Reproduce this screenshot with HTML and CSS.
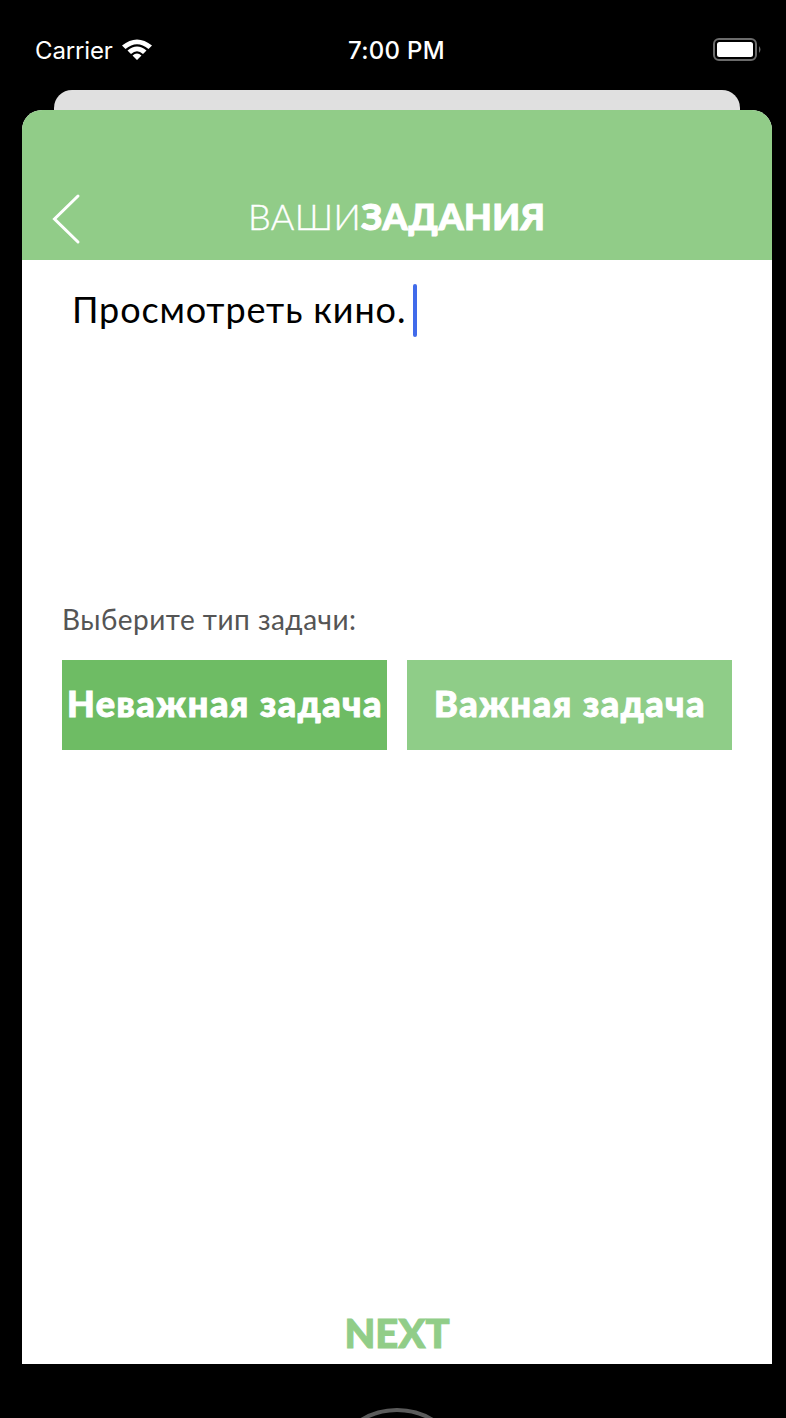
FILE: index.html
```
<!DOCTYPE html>
<html lang="ru">
<head>
<meta charset="utf-8">
<title>Ваши задания</title>
<link rel="stylesheet" href="styles.css">
</head>
<body>
<div class="phone">
  <header class="status">
    <div class="network"><span class="carrier">Carrier</span>
      <svg class="wifi" width="32" height="24" viewBox="0 0 32 24"><path d="M1 7.500Q16-4.500 31 7.500L27.500 11Q16 1.500 4.500 11Z M6.500 12.500Q16 4.500 25.500 12.500L22 16Q16 10.500 10 16Z M11.500 17.500Q16 13.500 20.500 17.500L16 22Z" fill="#fff"/></svg>
    </div>
    <time class="clock">7:00 PM</time>
    <svg class="battery" width="50" height="24" viewBox="0 0 50 24"><rect x="1" y="1" width="42" height="21" rx="5" fill="none" stroke="#6b6b6b" stroke-width="2"/><rect x="4" y="4" width="36" height="15" rx="2.500" fill="#fff"/><path d="M46 8Q49 11.500 46 15Z" fill="#6b6b6b"/></svg>
  </header>
  <div class="back-sheet"></div>
  <main class="sheet">
    <div class="navbar">
      <svg class="back" width="30" height="52" viewBox="0 0 30 52"><path d="M26 3L2.500 26L26 49" fill="none" stroke="#fff" stroke-width="3" stroke-linecap="round"/></svg>
      <h1 class="title"><span class="light">ВАШИ</span><span class="strong">ЗАДАНИЯ</span></h1>
    </div>
    <div class="editor"><span class="entry">Просмотреть кино.</span><i class="caret"></i></div>
    <p class="prompt">Выберите тип задачи:</p>
    <div class="choices">
      <button class="choice selected">Неважная задача</button>
      <button class="choice">Важная задача</button>
    </div>
    <button class="next">NEXT</button>
  </main>
  <footer class="bezel"><div class="home"></div></footer>
</div>
</body>
</html>
```
FILE: styles.css
```
* { box-sizing: border-box; }
body { margin: 0; background: #000; }
.phone { width: 786px; height: 1418px; overflow: hidden; display: flex; flex-direction: column; font-family: Lato, "Open Sans", sans-serif; }
.status { height: 90px; display: grid; grid-template-columns: 348px 1fr 73px; color: #fff; font: 24px/30px Inter, sans-serif; padding-top: 36px; }
.network { display: flex; padding-left: 35px; gap: 8px; }
.carrier { letter-spacing: -0.15px; }
.wifi { margin-top: 2px; }
.clock { font-weight: 500; letter-spacing: 0.3px; }
.battery { margin-top: 2px; }
.back-sheet { width: 686px; height: 20px; margin-left: 54px; background: #e0e0e0; border-radius: 18px 18px 0 0; }
.sheet { width: 750px; height: 1254px; margin-left: 22px; background: #fff; border-radius: 20px 20px 0 0; overflow: hidden; display: flex; flex-direction: column; }
.navbar { height: 150px; background: #91cc88; display: grid; grid-template-columns: 226px 1fr; padding-top: 83px; }
.back { margin-left: 30px; }
.title { margin: -2px 0 0; display: flex; color: #fff; font-size: 36px; line-height: 50px; white-space: nowrap; }
.light { font-weight: 300; letter-spacing: 0.4px; -webkit-text-stroke: 0.4px #fff; }
.strong { font-weight: 900; letter-spacing: 0.3px; -webkit-text-stroke: 1px #fff; }
.editor { height: 341px; padding: 24px 0 0 50px; display: flex; font-size: 36px; line-height: 52px; color: #000; white-space: nowrap; }
.entry { margin-top: -1px; letter-spacing: 0.88px; }
.caret { width: 4px; height: 53px; margin-left: 7px; border-radius: 2px; background: #416bea; }
.prompt { margin: -1px 0 0; padding-left: 40px; height: 60px; font-size: 28px; line-height: 38px; letter-spacing: 0.48px; color: #555; }
.choices { display: grid; grid-template-columns: 325px 325px; gap: 20px; margin-left: 40px; }
.choice { height: 90px; border: 0; padding: 0 0 4px; background: #8fcd88; color: #fff; font: 900 36px/86px Lato, "Open Sans", sans-serif; letter-spacing: 1.55px; text-indent: 1px; white-space: nowrap; -webkit-text-stroke: 1px #fff; }
.selected { background: #6ebc64; }
.next { margin-top: auto; height: 62px; border: 0; padding: 0; background: none; color: #91cd88; font: 900 40px/62px Lato, sans-serif; -webkit-text-stroke: 1px #91cd88; }
.bezel { height: 54px; padding-top: 44px; overflow: hidden; }
.home { width: 140px; height: 140px; margin-left: 327px; border: 4px solid #5b5b5b; border-radius: 50%; }
```
